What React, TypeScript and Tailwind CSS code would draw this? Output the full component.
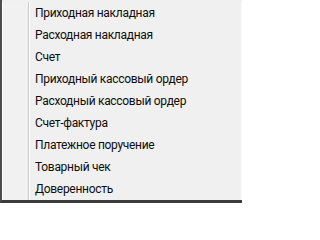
const items = [
  "Приходная накладная",
  "Расходная накладная",
  "Счет",
  "Приходный кассовый ордер",
  "Расходный кассовый ордер",
  "Счет-фактура",
  "Платежное поручение",
  "Товарный чек",
  "Доверенность",
];

export default function App() {
  return (
    <div className="w-[245px] h-[203px] bg-white font-['Roboto',sans-serif]">
      <div className="w-[242px] h-[203px] flex flex-col border-l-2 border-l-[#4d4d4d] border-b-[3px] border-b-[#3c3c3c] bg-[#f0f0f0]">
        <div className="flex flex-1 pt-[2px]">
          {/* icon gutter */}
          <div className="w-[26px] bg-[#f1f1f1] border-l border-l-white" />
          <div className="w-px bg-[#c9c9c9]" />
          <div className="w-px bg-white" />
          <ul className="flex-1 pl-[5px]">
            {items.map((item) => (
              <li
                key={item}
                className="h-[22px] flex items-center text-[12px] tracking-[-0.3px] text-[#0d0d0d] whitespace-nowrap"
              >
                {item}
              </li>
            ))}
          </ul>
          <div className="w-px bg-[#fafafa]" />
        </div>
      </div>
    </div>
  );
}
